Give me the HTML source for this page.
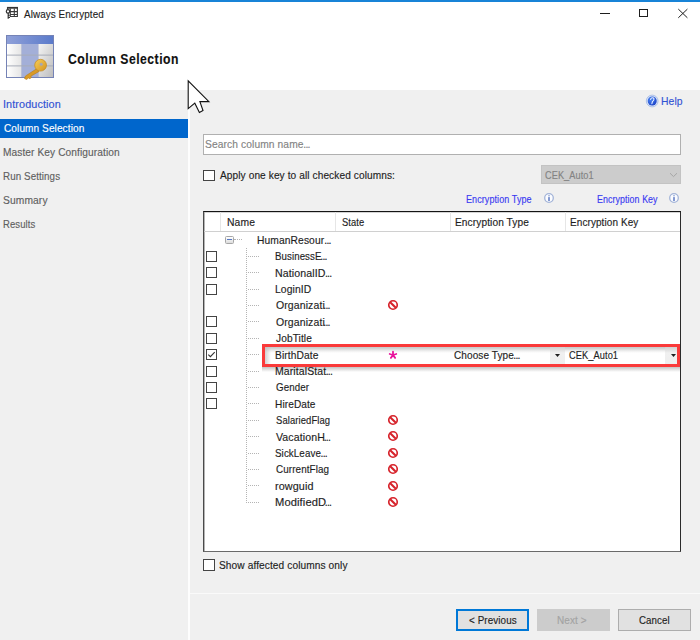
<!DOCTYPE html>
<html><head><meta charset="utf-8"><style>
html,body{margin:0;padding:0;}
body{width:700px;height:640px;position:relative;overflow:hidden;background:#fff;font-family:'Liberation Sans', sans-serif;}
.t{position:absolute;white-space:nowrap;line-height:1;-webkit-text-stroke:0.15px currentColor;}
</style></head><body>
<div style="position:absolute;left:0px;top:0px;width:700px;height:2px;background:#1883d7"></div>
<svg style="position:absolute;left:0;top:0" width="24" height="24" viewBox="0 0 24 24">
<rect x="7" y="6.9" width="11" height="1.8" fill="#333"/>
<path d="M17.4 7 V17 M10.3 16.5 H17.9 M10.3 11.6 H17.9 M10.3 14.5 H17.9 M14.3 8.5 V17 M10.3 8.5 V17 M7.5 7 V9.5" stroke="#3a3a3a" stroke-width="1.1" fill="none"/>
<circle cx="8" cy="11.4" r="1.7" fill="#fff" stroke="#333" stroke-width="1.2"/>
<path d="M8.2 13 V18.8 M8.2 15.4 H9.6 M8.2 17.5 H10" stroke="#333" stroke-width="1.2" fill="none"/>
</svg>
<div class="t" style="left:23.50px;top:8.79px;font-size:11px;color:#1e1e1e;font-weight:400;letter-spacing:0.100px;transform:scaleX(0.8963);transform-origin:0 0;">Always Encrypted</div>
<div style="position:absolute;left:600px;top:13px;width:9.5px;height:1px;background:#1e1e1e"></div>
<div style="position:absolute;left:639px;top:8.5px;width:8.5px;height:8.5px;border:1px solid #1e1e1e;box-sizing:border-box"></div>
<svg style="position:absolute;left:677px;top:7.5px" width="11" height="11" viewBox="0 0 11 11">
<path d="M1.3 1.1 L10.4 9.8 M10.4 1.1 L1.3 9.8" stroke="#1e1e1e" stroke-width="1"/></svg>
<svg style="position:absolute;left:0;top:0" width="64" height="86" viewBox="0 0 64 86">
<defs>
<linearGradient id="hd" x1="0" y1="0" x2="1" y2="0"><stop offset="0" stop-color="#8fa0d8"/><stop offset="1" stop-color="#5b7bcb"/></linearGradient>
<linearGradient id="c1" x1="0" y1="0" x2="1" y2="0"><stop offset="0" stop-color="#ffffff"/><stop offset="1" stop-color="#e4e4e4"/></linearGradient>
<linearGradient id="c3" x1="0" y1="0" x2="1" y2="1"><stop offset="0" stop-color="#f4f4f4"/><stop offset="1" stop-color="#bdbdbd"/></linearGradient>
<linearGradient id="key" x1="0" y1="0" x2="1" y2="1"><stop offset="0" stop-color="#f7cf5c"/><stop offset="1" stop-color="#d39420"/></linearGradient>
</defs>
<rect x="6" y="35" width="48" height="43" fill="#7583b6"/>
<rect x="7" y="36" width="46" height="8" fill="url(#hd)"/>
<rect x="7" y="44" width="14.7" height="33" fill="url(#c1)"/>
<rect x="21.7" y="44" width="16.7" height="33" fill="#a3afd8"/>
<rect x="38.4" y="44" width="14.6" height="33" fill="url(#c3)"/>
<rect x="7" y="54.6" width="46" height="1" fill="#a7acb8"/>
<rect x="7" y="65.4" width="46" height="1" fill="#a7acb8"/>
<path d="M37 68.5 L25.5 76 L24.5 78.5 L26.5 79.5 L28.5 78 L30 78.8 L31.5 77.2 L30.8 76.2 L39 71.5 Z" fill="#d99a26" stroke="#b87c18" stroke-width="0.6" stroke-linejoin="round"/>
<circle cx="40.6" cy="65.2" r="5.9" fill="url(#key)" stroke="#c48a1e" stroke-width="0.7"/>
<circle cx="41.2" cy="64.3" r="1.5" fill="#a2a6b8"/>
</svg>
<div class="t" style="left:67.80px;top:51.53px;font-size:14.5px;color:#111;font-weight:700;letter-spacing:0.600px;transform:scaleX(0.8403);transform-origin:0 0;">Column Selection</div>
<div style="position:absolute;left:0px;top:90px;width:700px;height:550px;background:#f0f0f0"></div>
<div style="position:absolute;left:188px;top:90px;width:2px;height:550px;background:#fdfdfd"></div>
<div style="position:absolute;left:190px;top:593px;width:510px;height:1px;background:#fafafa"></div>
<div style="position:absolute;left:0px;top:119px;width:188px;height:19px;background:#0066cc"></div>
<div class="t" style="left:2.68px;top:99.31px;font-size:10.5px;color:#3152d4;font-weight:400;letter-spacing:0.100px;transform:scaleX(1.0310);transform-origin:0 0;">Introduction</div>
<div class="t" style="left:3.70px;top:123.31px;font-size:10.5px;color:#ffffff;font-weight:400;letter-spacing:0.100px;transform:scaleX(0.9577);transform-origin:0 0;">Column Selection</div>
<div class="t" style="left:2.69px;top:147.31px;font-size:10.5px;color:#5f5f5f;font-weight:400;letter-spacing:0.100px;transform:scaleX(0.9660);transform-origin:0 0;">Master Key Configuration</div>
<div class="t" style="left:2.70px;top:171.31px;font-size:10.5px;color:#5f5f5f;font-weight:400;letter-spacing:0.100px;transform:scaleX(0.9314);transform-origin:0 0;">Run Settings</div>
<div class="t" style="left:2.67px;top:195.31px;font-size:10.5px;color:#5f5f5f;font-weight:400;letter-spacing:0.100px;transform:scaleX(0.9780);transform-origin:0 0;">Summary</div>
<div class="t" style="left:2.69px;top:219.31px;font-size:10.5px;color:#5f5f5f;font-weight:400;letter-spacing:0.100px;transform:scaleX(0.9041);transform-origin:0 0;">Results</div>
<svg style="position:absolute;left:645px;top:94px" width="14" height="14" viewBox="0 0 14 14">
<defs><radialGradient id="hg" cx="0.35" cy="0.35" r="0.75"><stop offset="0" stop-color="#4b86f5"/><stop offset="1" stop-color="#1a3fc4"/></radialGradient></defs>
<circle cx="7.2" cy="7" r="5.9" fill="#d6e2f6" stroke="#a9bde6" stroke-width="0.9"/>
<circle cx="7.2" cy="7" r="4.5" fill="url(#hg)"/>
<path d="M5.6 5.4 Q6 3.7 7.7 3.8 Q9.3 4 8.9 5.6 Q8.5 6.8 7.5 7.4 L6.9 9.6" stroke="#e8f0ff" stroke-width="1.1" fill="none" stroke-linecap="round"/>
</svg>
<div class="t" style="left:660.78px;top:95.87px;font-size:11.5px;color:#3152d4;font-weight:400;letter-spacing:0.100px;transform:scaleX(0.9011);transform-origin:0 0;">Help</div>
<div style="position:absolute;left:203px;top:134px;width:478px;height:21px;background:#fff;border:1px solid #b0b0b0;box-sizing:border-box"></div>
<div class="t" style="left:205.49px;top:138.51px;font-size:10.5px;color:#838383;font-weight:400;letter-spacing:0.100px;transform:scaleX(0.9757);transform-origin:0 0;">Search column name</div>
<div style="position:absolute;left:203px;top:170px;width:12px;height:11px;background:#fff;border:1px solid #444;box-sizing:border-box"></div>
<div class="t" style="left:220.10px;top:169.51px;font-size:10.5px;color:#1e1e1e;font-weight:400;letter-spacing:0.100px;transform:scaleX(0.9630);transform-origin:0 0;">Apply one key to all checked columns:</div>
<div style="position:absolute;left:541px;top:165px;width:140px;height:19px;background:#cccccc;border:1px solid #c3c3c3;box-sizing:border-box"></div>
<div class="t" style="left:545.00px;top:169.71px;font-size:10.5px;color:#838383;font-weight:400;letter-spacing:0.100px;transform:scaleX(0.8733);transform-origin:0 0;">CEK_Auto1</div>
<svg style="position:absolute;left:668px;top:172px" width="10" height="6" viewBox="0 0 10 6">
<path d="M2 1.2 L5.5 4.6 L9 1.2" stroke="#a6a6a6" stroke-width="1" fill="none"/></svg>
<div class="t" style="left:465.89px;top:194.53px;font-size:10px;color:#3a3af0;font-weight:400;letter-spacing:0.100px;transform:scaleX(0.8995);transform-origin:0 0;">Encryption Type</div>
<svg style="position:absolute;left:542.6px;top:192px" width="12" height="12" viewBox="0 0 12 12">
<circle cx="6" cy="6" r="4.3" fill="#fbfcff" stroke="#a3b4d8" stroke-width="1.3"/>
<rect x="5.35" y="5.1" width="1.3" height="3.9" fill="#4466bb"/><circle cx="6" cy="3.7" r="0.75" fill="#7d95cc"/></svg>
<div class="t" style="left:596.50px;top:194.53px;font-size:10px;color:#3a3af0;font-weight:400;letter-spacing:0.100px;transform:scaleX(0.8829);transform-origin:0 0;">Encryption Key</div>
<svg style="position:absolute;left:668px;top:192.2px" width="12" height="12" viewBox="0 0 12 12">
<circle cx="6" cy="6" r="4.3" fill="#fbfcff" stroke="#a3b4d8" stroke-width="1.3"/>
<rect x="5.35" y="5.1" width="1.3" height="3.9" fill="#4466bb"/><circle cx="6" cy="3.7" r="0.75" fill="#7d95cc"/></svg>
<div style="position:absolute;left:203px;top:211px;width:478px;height:341px;background:#fff;border:1px solid #2a2a2a;border-bottom-color:#6a6a6a;border-left-color:#4a4a4a;border-top-color:#141414;box-sizing:border-box"></div>
<div style="position:absolute;left:204px;top:212px;width:476px;height:1px;background:#d4d4d4"></div>
<div style="position:absolute;left:204px;top:212px;width:1px;height:339px;background:#b4b4b4"></div>
<div style="position:absolute;left:204px;top:231px;width:476px;height:1px;background:#d0d0d0"></div>
<div style="position:absolute;left:220px;top:212px;width:1px;height:19px;background:#e6e6e6"></div>
<div style="position:absolute;left:335px;top:212px;width:1px;height:19px;background:#e6e6e6"></div>
<div style="position:absolute;left:450px;top:212px;width:1px;height:19px;background:#e6e6e6"></div>
<div style="position:absolute;left:565px;top:212px;width:1px;height:19px;background:#e6e6e6"></div>
<div class="t" style="left:226.97px;top:216.91px;font-size:10.5px;color:#1e1e1e;font-weight:400;letter-spacing:0.100px;transform:scaleX(0.9849);transform-origin:0 0;">Name</div>
<div class="t" style="left:341.60px;top:216.91px;font-size:10.5px;color:#1e1e1e;font-weight:400;letter-spacing:0.100px;transform:scaleX(0.8917);transform-origin:0 0;">State</div>
<div class="t" style="left:455.29px;top:216.91px;font-size:10.5px;color:#1e1e1e;font-weight:400;letter-spacing:0.100px;transform:scaleX(0.9657);transform-origin:0 0;">Encryption Type</div>
<div class="t" style="left:570.39px;top:216.91px;font-size:10.5px;color:#1e1e1e;font-weight:400;letter-spacing:0.100px;transform:scaleX(0.9496);transform-origin:0 0;">Encryption Key</div>
<div style="position:absolute;left:246px;top:248px;width:0;height:255.2px;border-left:1px dotted #b4b4b4"></div>
<div style="position:absolute;left:225px;top:236px;width:9px;height:8px;border:1px solid #a6a6a6;border-radius:1.5px;box-sizing:border-box;background:linear-gradient(#fff,#dcdcdc)"></div>
<div style="position:absolute;left:227px;top:239px;width:5px;height:1px;background:#5577c4"></div>
<div style="position:absolute;left:234px;top:239px;width:8px;height:0;border-top:1px dotted #b4b4b4"></div>
<div style="position:absolute;left:265px;top:347px;width:413px;height:17px;background:linear-gradient(#c6caca 0px,#d2d4d4 1.5px,#f0f0f0 4px,#ffffff 6px);"></div>
<div style="position:absolute;left:265px;top:347px;width:6px;height:17px;background:linear-gradient(90deg,rgba(190,190,190,0.7),rgba(255,255,255,0))"></div>
<div style="position:absolute;left:262px;top:367px;width:418px;height:5px;background:linear-gradient(#c4c4c4,#e8e8e8 3px,rgba(255,255,255,0))"></div>
<div class="t" style="left:257.48px;top:234.71px;font-size:10.5px;color:#1e1e1e;font-weight:400;letter-spacing:0.100px;transform:scaleX(0.9773);transform-origin:0 0;">HumanResour</div>
<div style="position:absolute;left:248px;top:255.70px;width:11px;height:0;border-top:1px dotted #b4b4b4"></div>
<div class="t" style="left:274.58px;top:251.11px;font-size:10.5px;color:#1e1e1e;font-weight:400;letter-spacing:0.100px;transform:scaleX(0.9205);transform-origin:0 0;">BusinessE</div>
<div style="position:absolute;left:206px;top:251px;width:11px;height:11px;background:#fff;border:1px solid #444;box-sizing:border-box"></div>
<div style="position:absolute;left:248px;top:272.10px;width:11px;height:0;border-top:1px dotted #b4b4b4"></div>
<div class="t" style="left:274.59px;top:267.51px;font-size:10.5px;color:#1e1e1e;font-weight:400;letter-spacing:0.100px;transform:scaleX(1.0100);transform-origin:0 0;">NationalID</div>
<div style="position:absolute;left:206px;top:267px;width:11px;height:11px;background:#fff;border:1px solid #444;box-sizing:border-box"></div>
<div style="position:absolute;left:248px;top:288.50px;width:11px;height:0;border-top:1px dotted #b4b4b4"></div>
<div class="t" style="left:274.55px;top:283.91px;font-size:10.5px;color:#1e1e1e;font-weight:400;letter-spacing:0.100px;transform:scaleX(0.9861);transform-origin:0 0;">LoginID</div>
<div style="position:absolute;left:206px;top:284px;width:11px;height:11px;background:#fff;border:1px solid #444;box-sizing:border-box"></div>
<div style="position:absolute;left:248px;top:304.90px;width:11px;height:0;border-top:1px dotted #b4b4b4"></div>
<div class="t" style="left:275.60px;top:300.31px;font-size:10.5px;color:#1e1e1e;font-weight:400;letter-spacing:0.100px;transform:scaleX(1.0002);transform-origin:0 0;">Organizati</div>
<svg style="position:absolute;left:386.9px;top:299.10px" width="12" height="12" viewBox="0 0 12 12">
<circle cx="6" cy="6" r="4.25" fill="none" stroke="#d6222a" stroke-width="1.65"/>
<line x1="3.2" y1="3.2" x2="8.8" y2="8.8" stroke="#d6222a" stroke-width="2.1"/></svg>
<div style="position:absolute;left:248px;top:321.30px;width:11px;height:0;border-top:1px dotted #b4b4b4"></div>
<div class="t" style="left:275.60px;top:316.71px;font-size:10.5px;color:#1e1e1e;font-weight:400;letter-spacing:0.100px;transform:scaleX(1.0002);transform-origin:0 0;">Organizati</div>
<div style="position:absolute;left:206px;top:316px;width:11px;height:11px;background:#fff;border:1px solid #444;box-sizing:border-box"></div>
<div style="position:absolute;left:248px;top:337.70px;width:11px;height:0;border-top:1px dotted #b4b4b4"></div>
<div class="t" style="left:275.60px;top:333.11px;font-size:10.5px;color:#1e1e1e;font-weight:400;letter-spacing:0.100px;transform:scaleX(0.9671);transform-origin:0 0;">JobTitle</div>
<div style="position:absolute;left:206px;top:333px;width:11px;height:11px;background:#fff;border:1px solid #444;box-sizing:border-box"></div>
<div style="position:absolute;left:248px;top:354.10px;width:11px;height:0;border-top:1px dotted #b4b4b4"></div>
<div class="t" style="left:274.58px;top:349.51px;font-size:10.5px;color:#1e1e1e;font-weight:400;letter-spacing:0.100px;transform:scaleX(0.9756);transform-origin:0 0;">BirthDate</div>
<div style="position:absolute;left:206px;top:349px;width:11px;height:11px;background:#fff;border:1px solid #444;box-sizing:border-box"></div>
<svg style="position:absolute;left:206px;top:349px" width="11" height="11" viewBox="0 0 11 11">
<path d="M2.3 5.6 L4.4 7.7 L8.7 3.2" stroke="#333" stroke-width="1.1" fill="none"/></svg>
<svg style="position:absolute;left:387.9px;top:349.60px" width="10" height="10" viewBox="0 0 10 10">
<path d="M5 1.6 L5 5 M5 5 L8.3 4 M5 5 L7.1 7.9 M5 5 L2.9 7.9 M5 5 L1.7 4" stroke="#e8139c" stroke-width="1.8" stroke-linecap="round"/></svg>
<div style="position:absolute;left:248px;top:370.50px;width:11px;height:0;border-top:1px dotted #b4b4b4"></div>
<div class="t" style="left:274.59px;top:365.91px;font-size:10.5px;color:#1e1e1e;font-weight:400;letter-spacing:0.100px;transform:scaleX(0.9993);transform-origin:0 0;">MaritalStat</div>
<div style="position:absolute;left:206px;top:366px;width:11px;height:11px;background:#fff;border:1px solid #444;box-sizing:border-box"></div>
<div style="position:absolute;left:248px;top:386.90px;width:11px;height:0;border-top:1px dotted #b4b4b4"></div>
<div class="t" style="left:275.60px;top:382.31px;font-size:10.5px;color:#1e1e1e;font-weight:400;letter-spacing:0.100px;transform:scaleX(0.9268);transform-origin:0 0;">Gender</div>
<div style="position:absolute;left:206px;top:382px;width:11px;height:11px;background:#fff;border:1px solid #444;box-sizing:border-box"></div>
<div style="position:absolute;left:248px;top:403.30px;width:11px;height:0;border-top:1px dotted #b4b4b4"></div>
<div class="t" style="left:274.57px;top:398.71px;font-size:10.5px;color:#1e1e1e;font-weight:400;letter-spacing:0.100px;transform:scaleX(0.9608);transform-origin:0 0;">HireDate</div>
<div style="position:absolute;left:206px;top:398px;width:11px;height:11px;background:#fff;border:1px solid #444;box-sizing:border-box"></div>
<div style="position:absolute;left:248px;top:419.70px;width:11px;height:0;border-top:1px dotted #b4b4b4"></div>
<div class="t" style="left:275.60px;top:415.11px;font-size:10.5px;color:#1e1e1e;font-weight:400;letter-spacing:0.100px;transform:scaleX(0.8996);transform-origin:0 0;">SalariedFlag</div>
<svg style="position:absolute;left:386.9px;top:413.90px" width="12" height="12" viewBox="0 0 12 12">
<circle cx="6" cy="6" r="4.25" fill="none" stroke="#d6222a" stroke-width="1.65"/>
<line x1="3.2" y1="3.2" x2="8.8" y2="8.8" stroke="#d6222a" stroke-width="2.1"/></svg>
<div style="position:absolute;left:248px;top:436.10px;width:11px;height:0;border-top:1px dotted #b4b4b4"></div>
<div class="t" style="left:275.60px;top:431.51px;font-size:10.5px;color:#1e1e1e;font-weight:400;letter-spacing:0.100px;transform:scaleX(1.0076);transform-origin:0 0;">VacationH</div>
<svg style="position:absolute;left:386.9px;top:430.30px" width="12" height="12" viewBox="0 0 12 12">
<circle cx="6" cy="6" r="4.25" fill="none" stroke="#d6222a" stroke-width="1.65"/>
<line x1="3.2" y1="3.2" x2="8.8" y2="8.8" stroke="#d6222a" stroke-width="2.1"/></svg>
<div style="position:absolute;left:248px;top:452.50px;width:11px;height:0;border-top:1px dotted #b4b4b4"></div>
<div class="t" style="left:274.60px;top:447.91px;font-size:10.5px;color:#1e1e1e;font-weight:400;letter-spacing:0.100px;transform:scaleX(0.9308);transform-origin:0 0;">SickLeave</div>
<svg style="position:absolute;left:386.9px;top:446.70px" width="12" height="12" viewBox="0 0 12 12">
<circle cx="6" cy="6" r="4.25" fill="none" stroke="#d6222a" stroke-width="1.65"/>
<line x1="3.2" y1="3.2" x2="8.8" y2="8.8" stroke="#d6222a" stroke-width="2.1"/></svg>
<div style="position:absolute;left:248px;top:468.90px;width:11px;height:0;border-top:1px dotted #b4b4b4"></div>
<div class="t" style="left:275.60px;top:464.31px;font-size:10.5px;color:#1e1e1e;font-weight:400;letter-spacing:0.100px;transform:scaleX(0.9398);transform-origin:0 0;">CurrentFlag</div>
<svg style="position:absolute;left:386.9px;top:463.10px" width="12" height="12" viewBox="0 0 12 12">
<circle cx="6" cy="6" r="4.25" fill="none" stroke="#d6222a" stroke-width="1.65"/>
<line x1="3.2" y1="3.2" x2="8.8" y2="8.8" stroke="#d6222a" stroke-width="2.1"/></svg>
<div style="position:absolute;left:248px;top:485.30px;width:11px;height:0;border-top:1px dotted #b4b4b4"></div>
<div class="t" style="left:274.57px;top:480.71px;font-size:10.5px;color:#1e1e1e;font-weight:400;letter-spacing:0.100px;transform:scaleX(1.0305);transform-origin:0 0;">rowguid</div>
<svg style="position:absolute;left:386.9px;top:479.50px" width="12" height="12" viewBox="0 0 12 12">
<circle cx="6" cy="6" r="4.25" fill="none" stroke="#d6222a" stroke-width="1.65"/>
<line x1="3.2" y1="3.2" x2="8.8" y2="8.8" stroke="#d6222a" stroke-width="2.1"/></svg>
<div style="position:absolute;left:248px;top:501.70px;width:11px;height:0;border-top:1px dotted #b4b4b4"></div>
<div class="t" style="left:274.57px;top:497.11px;font-size:10.5px;color:#1e1e1e;font-weight:400;letter-spacing:0.100px;transform:scaleX(1.0623);transform-origin:0 0;">ModifiedD</div>
<svg style="position:absolute;left:386.9px;top:495.90px" width="12" height="12" viewBox="0 0 12 12">
<circle cx="6" cy="6" r="4.25" fill="none" stroke="#d6222a" stroke-width="1.65"/>
<line x1="3.2" y1="3.2" x2="8.8" y2="8.8" stroke="#d6222a" stroke-width="2.1"/></svg>
<div class="t" style="left:454.20px;top:350.31px;font-size:10.5px;color:#1e1e1e;font-weight:400;letter-spacing:0.100px;transform:scaleX(0.9551);transform-origin:0 0;">Choose Type</div>
<div style="position:absolute;left:550px;top:347px;width:15px;height:17px;background:linear-gradient(#d0d0d0,#f0f0f0 6px,#eeeeee)"></div>
<svg style="position:absolute;left:555.2px;top:354px" width="5" height="3" viewBox="0 0 5 3"><path d="M0 0 L5 0 L2.5 3Z" fill="#1e1e1e"/></svg>
<div class="t" style="left:569.20px;top:349.91px;font-size:10.5px;color:#1e1e1e;font-weight:400;letter-spacing:0.100px;transform:scaleX(0.8805);transform-origin:0 0;">CEK_Auto1</div>
<div style="position:absolute;left:665px;top:347px;width:13px;height:17px;background:linear-gradient(#d0d0d0,#f0f0f0 6px,#eeeeee)"></div>
<svg style="position:absolute;left:670.5px;top:354px" width="5" height="3" viewBox="0 0 5 3"><path d="M0 0 L5 0 L2.5 3Z" fill="#1e1e1e"/></svg>
<div style="position:absolute;left:262px;top:344px;width:418px;height:23px;border:3px solid #fa3a3a;box-sizing:border-box"></div>
<div style="position:absolute;left:203px;top:559px;width:12px;height:12px;background:#fff;border:1px solid #444;box-sizing:border-box"></div>
<div class="t" style="left:218.89px;top:559.71px;font-size:10.5px;color:#1e1e1e;font-weight:400;letter-spacing:0.100px;transform:scaleX(0.9657);transform-origin:0 0;">Show affected columns only</div>
<div style="position:absolute;left:456px;top:609px;width:73px;height:22px;background:#e1e1e1;border:2px solid #0078d7;box-sizing:border-box"></div>
<div class="t" style="left:468.90px;top:614.71px;font-size:10.5px;color:#1e1e1e;font-weight:400;letter-spacing:0.100px;transform:scaleX(0.9376);transform-origin:0 0;">&lt; Previous</div>
<div style="position:absolute;left:537px;top:609px;width:73px;height:22px;background:#cccccc"></div>
<div class="t" style="left:556.77px;top:614.71px;font-size:10.5px;color:#a3a3a3;font-weight:400;letter-spacing:0.100px;transform:scaleX(0.9491);transform-origin:0 0;">Next &gt;</div>
<div style="position:absolute;left:618px;top:609px;width:73px;height:22px;background:#e1e1e1;border:1px solid #adadad;box-sizing:border-box"></div>
<div class="t" style="left:638.70px;top:614.71px;font-size:10.5px;color:#1e1e1e;font-weight:400;letter-spacing:0.100px;transform:scaleX(0.9252);transform-origin:0 0;">Cancel</div>
<svg style="position:absolute;left:186px;top:79px" width="26" height="36" viewBox="0 0 26 36">
<path d="M2.2 1.9 L2.2 29.7 L8.8 24.2 L13.4 33.6 L17 31.6 L13.9 22.6 L22.9 22.6 Z" fill="#fff" stroke="#111" stroke-width="1.1" stroke-linejoin="miter"/></svg>
<div class="t" style="left:303.30px;top:138.51px;font-size:10.5px;color:#838383;font-weight:400;letter-spacing:-0.800px;">...</div>
<div class="t" style="left:324.30px;top:234.71px;font-size:10.5px;color:#1e1e1e;font-weight:400;letter-spacing:-0.800px;">...</div>
<div class="t" style="left:320.30px;top:251.11px;font-size:10.5px;color:#1e1e1e;font-weight:400;letter-spacing:-0.800px;">...</div>
<div class="t" style="left:325.00px;top:267.51px;font-size:10.5px;color:#1e1e1e;font-weight:400;letter-spacing:-0.800px;">...</div>
<div class="t" style="left:323.30px;top:300.31px;font-size:10.5px;color:#1e1e1e;font-weight:400;letter-spacing:-0.800px;">...</div>
<div class="t" style="left:323.30px;top:316.71px;font-size:10.5px;color:#1e1e1e;font-weight:400;letter-spacing:-0.800px;">...</div>
<div class="t" style="left:325.70px;top:365.91px;font-size:10.5px;color:#1e1e1e;font-weight:400;letter-spacing:-0.800px;">...</div>
<div class="t" style="left:323.70px;top:431.51px;font-size:10.5px;color:#1e1e1e;font-weight:400;letter-spacing:-0.800px;">...</div>
<div class="t" style="left:320.60px;top:447.91px;font-size:10.5px;color:#1e1e1e;font-weight:400;letter-spacing:-0.800px;">...</div>
<div class="t" style="left:324.80px;top:497.11px;font-size:10.5px;color:#1e1e1e;font-weight:400;letter-spacing:-0.800px;">...</div>
<div class="t" style="left:513.30px;top:350.31px;font-size:10.5px;color:#1e1e1e;font-weight:400;letter-spacing:-0.800px;">...</div>
</body></html>
